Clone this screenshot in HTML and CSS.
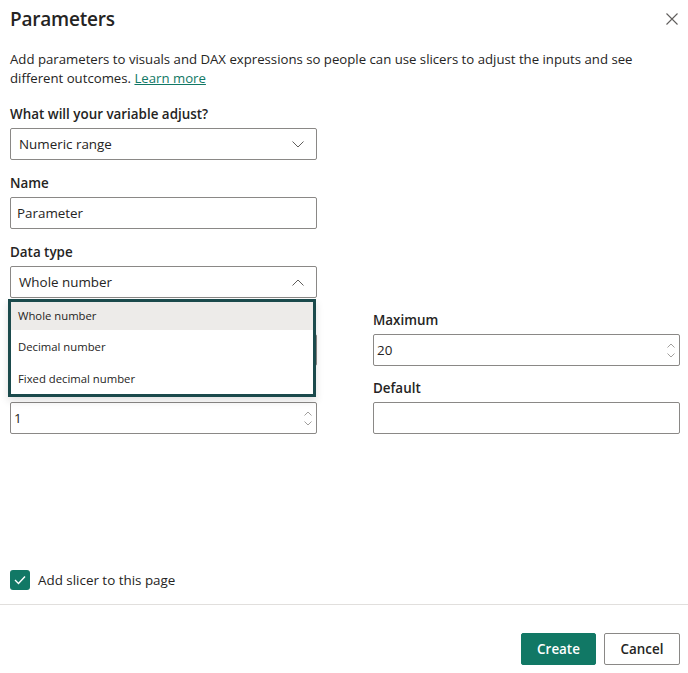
FILE: index.html
```html
<!DOCTYPE html>
<html lang="en">
  <head>
    <meta charset="UTF-8" />
    <meta name="viewport" content="width=device-width, initial-scale=1.0" />
    <title>Parameters</title>
    <link rel="stylesheet" href="styles.css">
  </head>
  <body>
    <div class="dialog">
      <div class="dialog-main">
        <header class="dialog-header">
          <h1>Parameters</h1>
          <span class="close-btn" title="Close">
            <svg width="12" height="12" viewBox="0 0 12 12">
              <path d="M0.5 0.5 L11.5 11.5 M11.5 0.5 L0.5 11.5" stroke="#605e5c" stroke-width="1.1" fill="none" />
            </svg>
          </span>
        </header>

        <p class="description">
          Add parameters to visuals and DAX expressions so people can use slicers to adjust the inputs and see
          different outcomes. <a href="#">Learn more</a>
        </p>

        <div class="form-half">
          <div class="field">
            <label>What will your variable adjust?</label>
            <div class="select">
              <span>Numeric range</span>
              <svg class="chevron" width="12" height="7" viewBox="0 0 12 7">
                <path d="M0.5 0.5 L6 6 L11.5 0.5" stroke="#605e5c" stroke-width="1" fill="none" />
              </svg>
            </div>
          </div>

          <div class="field">
            <label>Name</label>
            <div class="text-input">Parameter</div>
          </div>

          <div class="field dropdown-wrap">
            <label>Data type</label>
            <div class="select">
              <span>Whole number</span>
              <svg class="chevron" width="12" height="7" viewBox="0 0 12 7">
                <path d="M0.5 6.5 L6 1 L11.5 6.5" stroke="#605e5c" stroke-width="1" fill="none" />
              </svg>
            </div>
            <!-- open list of the data type select -->
            <ul class="dropdown-menu">
              <li class="menu-item active">Whole number</li>
              <li class="menu-item">Decimal number</li>
              <li class="menu-item">Fixed decimal number</li>
            </ul>
          </div>
        </div>

        <div class="form-grid">
          <div class="field">
            <label>Minimum</label>
            <div class="number-input">
              <span>0</span>
              <span class="spin">
                <svg width="8" height="5" viewBox="0 0 8 5"><path d="M0.5 4.5 L4 1 L7.5 4.5" stroke="#a19f9d" fill="none" /></svg>
                <svg width="8" height="5" viewBox="0 0 8 5"><path d="M0.5 0.5 L4 4 L7.5 0.5" stroke="#a19f9d" fill="none" /></svg>
              </span>
            </div>
          </div>
          <div class="field">
            <label>Maximum</label>
            <div class="number-input">
              <span>20</span>
              <span class="spin">
                <svg width="8" height="5" viewBox="0 0 8 5"><path d="M0.5 4.5 L4 1 L7.5 4.5" stroke="#a19f9d" fill="none" /></svg>
                <svg width="8" height="5" viewBox="0 0 8 5"><path d="M0.5 0.5 L4 4 L7.5 0.5" stroke="#a19f9d" fill="none" /></svg>
              </span>
            </div>
          </div>
          <div class="field">
            <label>Increment</label>
            <div class="number-input">
              <span>1</span>
              <span class="spin">
                <svg width="8" height="5" viewBox="0 0 8 5"><path d="M0.5 4.5 L4 1 L7.5 4.5" stroke="#a19f9d" fill="none" /></svg>
                <svg width="8" height="5" viewBox="0 0 8 5"><path d="M0.5 0.5 L4 4 L7.5 0.5" stroke="#a19f9d" fill="none" /></svg>
              </span>
            </div>
          </div>
          <div class="field">
            <label>Default</label>
            <div class="number-input"></div>
          </div>
        </div>

        <div class="checkbox-row">
          <span class="checkbox">
            <svg width="12" height="10" viewBox="0 0 12 10">
              <path d="M1 5 L4.5 8.5 L11 1.5" stroke="#fff" stroke-width="1.4" fill="none" />
            </svg>
          </span>
          <span>Add slicer to this page</span>
        </div>
      </div>

      <footer class="dialog-footer">
        <button class="btn btn-primary">Create</button>
        <button class="btn">Cancel</button>
      </footer>
    </div>
  </body>
</html>
```

FILE: styles.css
```css
/* base */
* {
  margin: 0;
  padding: 0;
  box-sizing: border-box;
  font-family: "Open Sans", "Noto Sans", Arial, sans-serif;
}

html,
body {
  height: 100%;
}

body {
  background-color: #fff;
  color: #252423;
  font-size: 14px;
}

.dialog {
  display: flex;
  flex-direction: column;
  height: 100vh;
}

.dialog-main {
  flex: 1;
  display: flex;
  flex-direction: column;
  padding: 0 8px 0 10px;
}

/* header */
.dialog-header {
  display: flex;
  justify-content: space-between;
  align-items: center;
  height: 37px;
}

h1 {
  font-size: 19px;
  font-weight: 600;
  letter-spacing: -0.2px;
}

.close-btn {
  display: flex;
  margin-right: 2px;
  margin-top: 1px;
}

.description {
  margin-top: 13px;
  line-height: 19px;
  font-size: 13.2px;
}

.description a {
  color: #117865;
  text-decoration: underline;
}

/* fields */
.form-half {
  width: 307px;
  margin-top: 15px;
}

.field {
  margin-bottom: 12px;
}

.form-half .dropdown-wrap,
.form-grid .field {
  margin-bottom: 11px;
}

label {
  display: block;
  height: 22px;
  line-height: 22px;
  margin-bottom: 3px;
  font-weight: 600;
  font-size: 13.4px;
}

.select,
.text-input,
.number-input {
  display: flex;
  align-items: center;
  height: 32px;
  border: 1px solid #8a8886;
  border-radius: 2px;
  font-size: 13.4px;
}

.select {
  justify-content: space-between;
  padding: 0 12px 0 8px;
}

.text-input {
  padding: 0 6px;
}

.number-input {
  justify-content: space-between;
  padding: 0 4px 0 3px;
}

.spin {
  display: flex;
  flex-direction: column;
  gap: 5px;
  margin-top: 1px;
}

.spin svg {
  display: block;
}

.form-grid {
  display: grid;
  grid-template-columns: 307px 307px;
  column-gap: 56px;
}

/* open dropdown list */
.dropdown-wrap {
  position: relative;
}

.dropdown-menu {
  position: absolute;
  top: 58px;
  left: -2px;
  width: 308px;
  list-style: none;
  background-color: #fff;
  border: 3px solid #1b4a4c;
  box-shadow: 0 4px 8px rgba(0, 0, 0, 0.12);
  z-index: 10;
}

.menu-item {
  display: flex;
  align-items: center;
  height: 32px;
  padding-left: 7px;
  font-size: 11.3px;
}

.menu-item.active {
  height: 28px;
  padding-bottom: 2px;
  background-color: #edebe9;
}

/* checkbox */
.checkbox-row {
  margin-top: auto;
  margin-bottom: 14px;
  display: flex;
  align-items: center;
  gap: 8px;
  font-size: 13.4px;
}

.checkbox {
  width: 20px;
  height: 20px;
  border-radius: 3px;
  background-color: #117865;
  display: flex;
  align-items: center;
  justify-content: center;
}

/* footer */
.dialog-footer {
  border-top: 1px solid #e1dfdd;
  display: flex;
  justify-content: flex-end;
  gap: 8px;
  padding: 28px 8px 8px;
}

.btn {
  height: 32px;
  width: 76px;
  border: 1px solid #8a8886;
  border-radius: 2px;
  background-color: #fff;
  color: #252423;
  font-size: 13.4px;
  font-weight: 600;
  cursor: pointer;
}

.btn-primary {
  width: 75px;
  background-color: #117865;
  border-color: #117865;
  color: #fff;
}
```
